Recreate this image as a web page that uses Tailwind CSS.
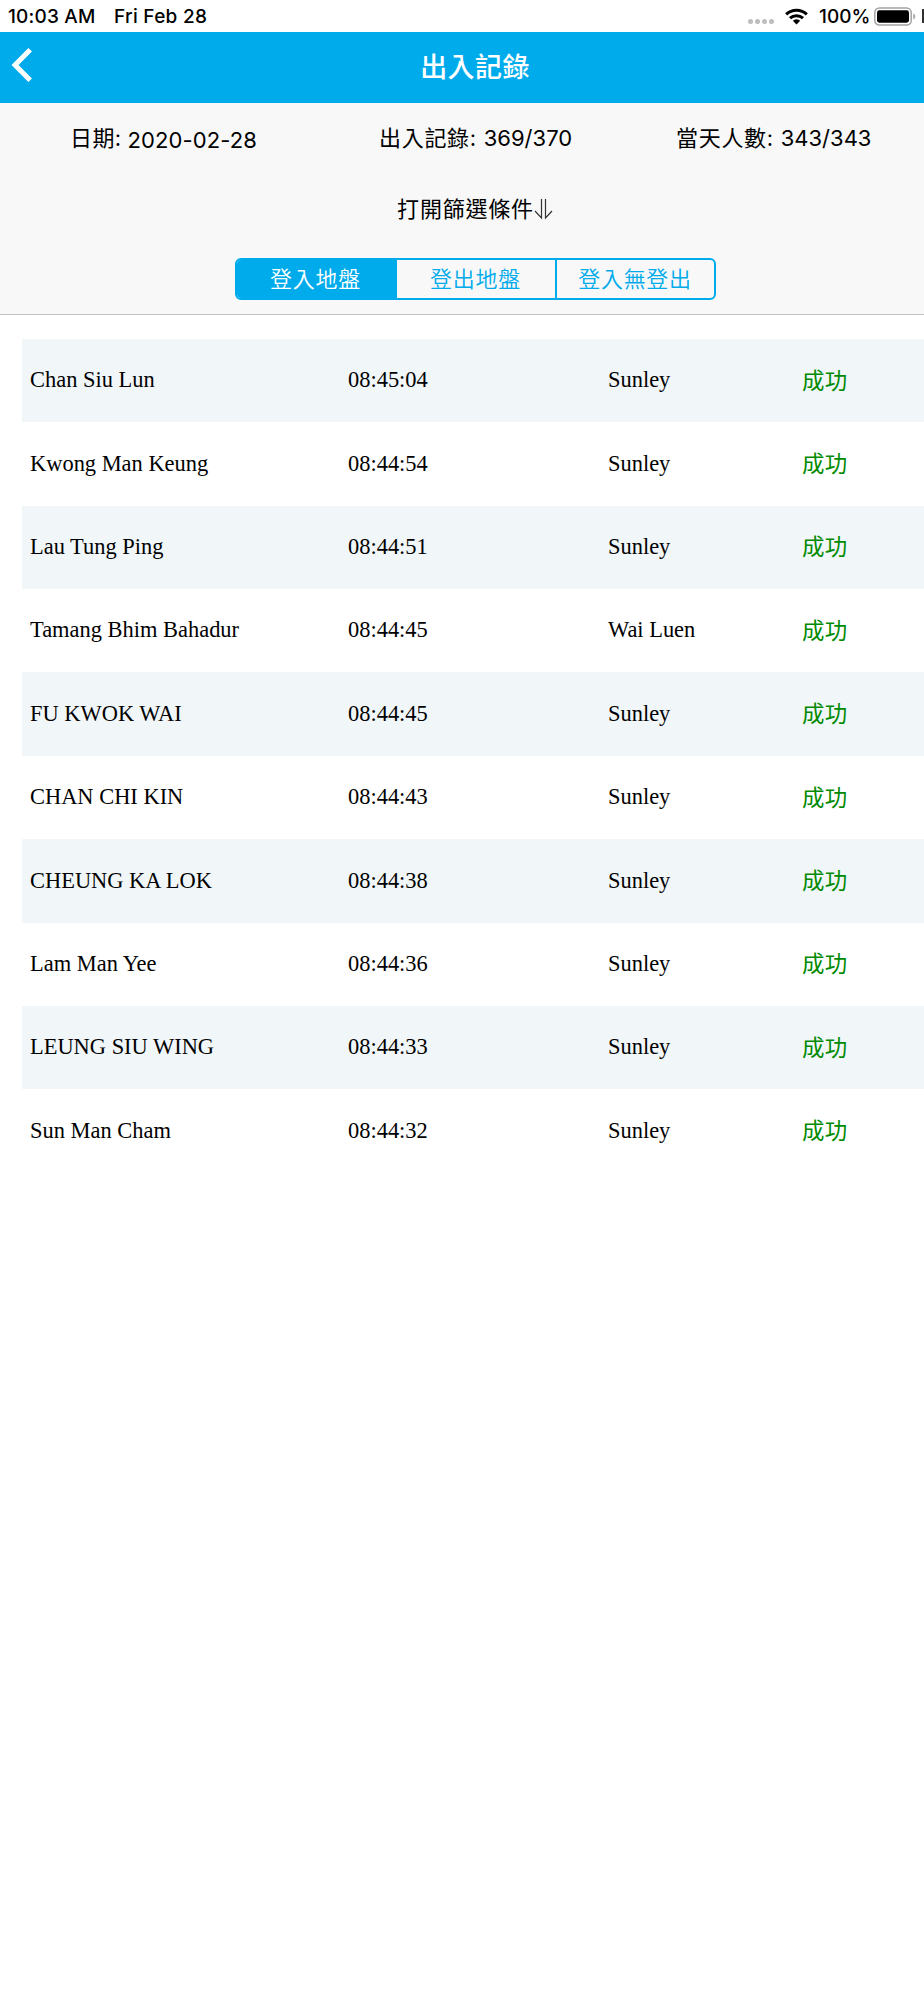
<!DOCTYPE html>
<html lang="zh-HK">
<head>
  <meta charset="UTF-8">
  <meta name="viewport" content="width=device-width, initial-scale=1.0">
  <title>出入記錄</title>
  <script src="https://cdn.jsdelivr.net/npm/@tailwindcss/browser@4"></script>
</head>
<body class="min-h-screen overflow-x-hidden bg-white text-black font-['Inter','Noto_Sans_CJK_TC',sans-serif]">
  <div class="w-[950px]">
    <!-- Status bar -->
    <div class="flex h-8 items-center pl-2 text-[19px] font-medium whitespace-nowrap">
      <span class="w-[106px] pt-[2px] tracking-[0.2px]">10:03 AM</span>
      <span class="w-[634px] pt-[2px] tracking-[0.3px]">Fri Feb 28</span>
      <div class="mt-[11px] flex w-[37px] gap-[2px]">
        <i class="size-[5px] rounded-full bg-[#bdbdbd]"></i>
        <i class="size-[5px] rounded-full bg-[#bdbdbd]"></i>
        <i class="size-[5px] rounded-full bg-[#bdbdbd]"></i>
        <i class="size-[5px] rounded-full bg-[#bdbdbd]"></i>
      </div>
      <svg class="h-[17px] w-[23px]" viewBox="0 0 23 17" fill="none" stroke="#000" stroke-width="3">
        <path d="M1.2 6.3a14.8 14.8 0 0 1 20.6 0M5 10.2a9.5 9.5 0 0 1 13 0"/>
        <path d="M11.5 16.5 7.8 12.8a5.3 5.3 0 0 1 7.4 0z" fill="#000" stroke="none"/>
      </svg>
      <span class="ml-[11px] w-[55px] pt-[2px]">100%</span>
      <svg class="h-[19px] w-[43px]" viewBox="0 0 43 19">
        <rect x=".8" y="1" width="36.4" height="17" rx="4.5" fill="#fff" stroke="#a3a3a3" stroke-width="1.5"/>
        <rect x="3" y="3.3" width="32" height="12.4" rx="2.4"/>
        <path d="M39.3 6.5c2.6 1 2.6 5 0 6z" fill="#a3a3a3"/>
      </svg>
      <i class="ml-[5px] h-[14px] w-2 bg-[#333]"></i>
    </div>

    <!-- Nav bar -->
    <header class="grid h-[71px] grid-cols-[100px_1fr_100px] items-center bg-[#00abec] text-white">
      <svg class="ml-[11px] -mt-[5px] h-[36px] w-[22px]" viewBox="0 0 22 36" fill="none" stroke="#fff" stroke-width="5">
        <path d="M19.2 2.8 4 18l15.2 15.2"/>
      </svg>
      <h1 class="pt-px text-center text-[27px] font-medium tracking-[0.4px]">出入記錄</h1>
    </header>

    <!-- Summary and filters -->
    <section class="h-[212px] border-b border-[#c4c4c4] bg-[#f8f8f8] text-[22px]">
      <div class="flex h-[71px] items-center pl-[70px] whitespace-nowrap">
        <div class="flex w-[309px] gap-[6px]"><span class="pt-px tracking-[0.4px]">日期:</span><span class="pt-[3px] tracking-[0.1px]">2020-02-28</span></div>
        <div class="w-[297px]"><span class="tracking-[0.7px]">出入記錄: </span>369/370</div>
        <div><span class="tracking-[0.7px]">當天人數: </span>343/343</div>
      </div>
      <div class="flex h-[70px] items-center justify-center">
        <span class="tracking-[0.8px]">打開篩選條件</span>
        <svg class="h-[22px] w-[19px]" viewBox="0 0 19 22" fill="none" stroke="#333" stroke-width="1.2">
          <path d="M7.5 1v19L1 13M11.5 1v19L18 13"/>
        </svg>
      </div>
      <div class="mx-auto mt-[14px] grid h-[42px] w-[481px] grid-cols-[160px_160px_1fr] divide-x-2 divide-[#00abec] overflow-hidden rounded-md border-2 border-[#00abec] tracking-[0.7px] text-[#00abec]">
        <button class="bg-[#00abec] font-[350] text-white">登入地盤</button>
        <button class="font-[350]">登出地盤</button>
        <button class="font-[350]">登入無登出</button>
      </div>
    </section>

    <!-- Records -->
    <ul id="records" class="ml-[22px] mt-[23.8px] font-['Liberation_Serif','Noto_Sans_CJK_TC',serif] text-[22.45px]"></ul>
  </div>

  <script>
    const records = [
      ['Chan Siu Lun', '08:45:04', 'Sunley'],
      ['Kwong Man Keung', '08:44:54', 'Sunley'],
      ['Lau Tung Ping', '08:44:51', 'Sunley'],
      ['Tamang Bhim Bahadur', '08:44:45', 'Wai Luen'],
      ['FU KWOK WAI', '08:44:45', 'Sunley'],
      ['CHAN CHI KIN', '08:44:43', 'Sunley'],
      ['CHEUNG KA LOK', '08:44:38', 'Sunley'],
      ['Lam Man Yee', '08:44:36', 'Sunley'],
      ['LEUNG SIU WING', '08:44:33', 'Sunley'],
      ['Sun Man Cham', '08:44:32', 'Sunley'],
    ];

    document.getElementById('records').innerHTML = records.map(([name, time, company]) => `
      <li class="grid h-[83.4px] grid-cols-[318px_260px_194px_1fr] items-center pl-2 odd:bg-[#f1f6f9]">
        <span class="pb-px">${name}</span>
        <span class="pb-px">${time}</span>
        <span class="pb-px">${company}</span>
        <span class="pt-[2px] tracking-[0.4px] text-[#008a00]">成功</span>
      </li>`).join('');
  </script>
</body>
</html>
